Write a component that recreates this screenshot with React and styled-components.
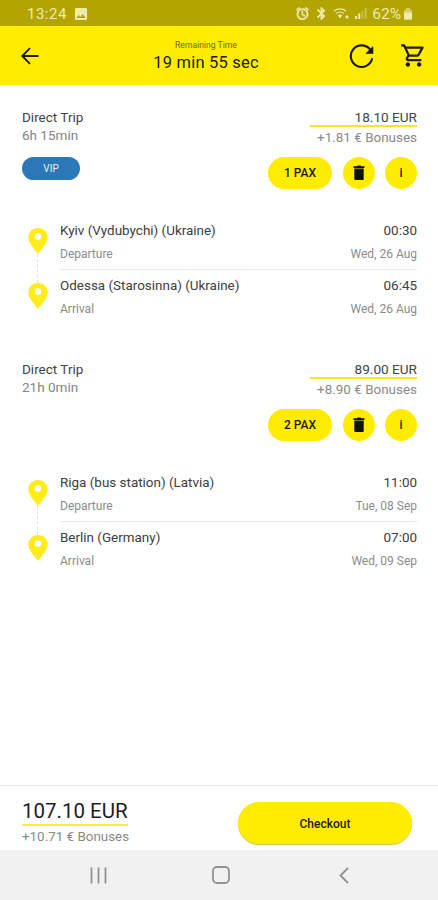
import React from "react";
import styled, { createGlobalStyle } from "styled-components";
import { MdOutlineShoppingCart, MdAlarm, MdBluetooth, MdImage } from "react-icons/md";

const GlobalStyle = createGlobalStyle`
  * {
    box-sizing: border-box;
  }

  body {
    margin: 0;
    background: #fff;
    font-family: Roboto, sans-serif;
    color: #2b2b2b;
  }

  button {
    border: 0;
    padding: 0;
    font-family: inherit;
  }

  svg {
    display: block;
    flex: none;
  }
`

const Screen = styled.div`
  width: 438px;
  height: 900px;
  display: flex;
  flex-direction: column;
  overflow: hidden;
  background: #fff;
`

const StatusBar = styled.div`
  height: 26px;
  flex: none;
  display: flex;
  justify-content: space-between;
  align-items: center;
  padding: 1px 25px 0 27px;
  background: #b3a500;
  color: #f0e9b0;
  font-size: 15px;
`

const StatusGroup = styled.div`
  display: flex;
  align-items: center;
  gap: ${({$gap}) => $gap}px;
`

const Clock = styled.span`
  letter-spacing: 0.5px;
`

const Charge = styled.span`
  margin: 0 -2px 0 1px;
  font-size: 15.5px;
`

const StatusIcon = styled.span`
  path:not([fill="none"]) {
    stroke: currentColor;
    stroke-width: 1px;
  }
`

const Header = styled.header`
  height: 59px;
  flex: none;
  display: grid;
  grid-template-columns: 110px 152px 1fr;
  align-items: center;
  padding: 0 11px 0 20px;
  background: #ffec00;
  color: #1c1a00;
`

const HeaderActions = styled.div`
  display: flex;
  justify-content: flex-end;
  align-items: center;
  gap: 25px;
`

const Timer = styled.div`
  display: flex;
  flex-direction: column;
  align-items: center;
  white-space: nowrap;
`

const TimerLabel = styled.div`
  margin-top: 1px;
  font-size: 8.6px;
  line-height: 10px;
  color: #6e6600;
`

const TimerValue = styled.div`
  margin-top: 3px;
  font-size: 16.5px;
  line-height: 20px;
  letter-spacing: 0.2px;
`

const Trips = styled.main`
  flex: 1;
  padding: 21.5px 21px 0 22px;
`

const Trip = styled.section`
  height: 252.3px;
`

const TripHead = styled.div`
  height: 112px;
  display: flex;
  justify-content: space-between;
`

const TripInfo = styled.div`
  display: flex;
  flex-direction: column;
  align-items: flex-start;
`

const TripTitle = styled.div`
  font-size: 13.5px;
  line-height: 20px;
  color: #444;
`

const Duration = styled.div`
  font-size: 13.5px;
  line-height: 17px;
  color: #858585;
`

const VipBadge = styled.div`
  width: 58px;
  height: 23px;
  margin-top: 13px;
  border-radius: 12px;
  background: #2b77b8;
  color: #e4f0fa;
  font-size: 10px;
  line-height: 23px;
  text-align: center;
`

const TripCost = styled.div`
  display: flex;
  flex-direction: column;
  align-items: flex-end;
`

const Price = styled.div`
  width: 107px;
  height: 20.5px;
  border-bottom: 2px solid #fbe61c;
  font-size: 13.6px;
  line-height: 20px;
  text-align: right;
  color: #444;
`

const Bonus = styled.div`
  margin-top: 2px;
  font-size: ${({$size}) => $size || 13.45}px;
  line-height: 18px;
  color: #8a8a8a;
  white-space: nowrap;
`

const TripActions = styled.div`
  display: flex;
  gap: 10.5px;
  margin-top: 9.5px;
`

const ActionButton = styled.button`
  width: ${({$wide}) => ($wide ? 64 : 32)}px;
  height: 32px;
  display: flex;
  align-items: center;
  justify-content: center;
  border-radius: 16px;
  background: #ffec00;
  color: #1c1a00;
  font-size: 12px;
  font-weight: 500;
`

const Route = styled.div`
  display: flex;
`

const Markers = styled.div`
  width: 31px;
  margin-right: 7px;
  padding-top: 9px;
  display: flex;
  flex-direction: column;
  align-items: center;
`

const MarkerLine = styled.div`
  height: 29px;
  border-left: 1px dashed #e2e2e2;
`

const Stops = styled.div`
  flex: 1;
  display: flex;
  flex-direction: column;
  gap: 4px;
`

const Stop = styled.div`
  height: 51px;
  padding-top: 2.2px;
  border-bottom: ${({$last}) => ($last ? "0" : "1px solid #ebebeb")};
`

const StopRow = styled.div`
  display: flex;
  justify-content: space-between;
  white-space: nowrap;
`

const StopName = styled.div`
  font-size: 13.45px;
  line-height: 20px;
  color: #404040;
`

const StopNote = styled.div`
  margin-top: 4.3px;
  font-size: 12px;
  line-height: 18px;
  color: #8c8c8c;
`

const Footer = styled.footer`
  height: 65px;
  flex: none;
  display: flex;
  justify-content: space-between;
  padding: 14px 26px 0 22px;
  border-top: 1px solid #e9e9e9;
`

const Total = styled.div`
  width: 106px;
  height: 26px;
  border-bottom: 2px solid #f7f03c;
  font-size: 20.5px;
  line-height: 22px;
  color: #1e1e1e;
  white-space: nowrap;
`

const CheckoutButton = styled.button`
  width: 174px;
  height: 42px;
  margin-top: 2px;
  padding-top: 2px;
  border-radius: 21px;
  background: #ffec00;
  box-shadow: 0 1px 1px #cfc248;
  color: #1c1a00;
  font-size: 12px;
  font-weight: 500;
`

const NavBar = styled.nav`
  height: 50px;
  flex: none;
  display: grid;
  grid-template-columns: repeat(3, 122.5px);
  justify-content: center;
  align-items: center;
  justify-items: center;
  padding-left: 4px;
  background: #f1f1f1;
`

const BackIcon = () => (
  <svg width="20" height="20" viewBox="0 0 20 20" fill="none" stroke="#1c1a00" strokeWidth="1.8">
    <path d="M18.5 10H3M10 2.2L2.2 10L10 17.8" />
  </svg>
);

const RefreshIcon = () => (
  <svg width="26" height="26" viewBox="0 0 26 26">
    <path d="M21.6 7.2A10.8 10.8 0 1 0 23.2 15.3" fill="none" stroke="#1c1a00" strokeWidth="2.1" />
    <path d="M24 3.6V10.6H16.8Z" fill="#1c1a00" stroke="#1c1a00" strokeWidth="0.6" />
  </svg>
);

const TrashIcon = () => (
  <svg width="12" height="16" viewBox="0 0 12 16" fill="#111">
    <path d="M0.5 1.2H3.8L4.5 0.4H7.5L8.2 1.2H11.5V2.9H0.5ZM1.3 3.5H10.7V14Q10.7 15 9.7 15H2.3Q1.3 15 1.3 14Z" />
  </svg>
);

const WifiIcon = () => (
  <svg width="18" height="14" viewBox="0 0 18 14" fill="none" stroke="currentColor" strokeWidth="1.2">
    <path d="M1 4.2C4.5 1.2 9.5 1.2 13 4.2M3 6.6C5.5 4.6 8.5 4.6 11 6.6" />
    <path d="M4.7 8.3Q7 6.8 9.3 8.3L7 11.5Z" fill="currentColor" stroke="none" />
    <path d="M12 10L14 8L16 10L14 12Z" fill="currentColor" stroke="none" />
  </svg>
);

const SignalIcon = () => (
  <svg width="12" height="13" viewBox="0 0 12 13" fill="currentColor">
    <rect x="0" y="9" width="2" height="3" />
    <rect x="3.2" y="6.5" width="2" height="5.5" />
    <rect x="6.4" y="4" width="2" height="8" opacity="0.4" />
    <rect x="9.6" y="1" width="2" height="11" opacity="0.4" />
  </svg>
);

const BatteryIcon = () => (
  <svg width="10" height="13" viewBox="0 0 10 13" fill="currentColor">
    <path d="M3 1H7V3H9V12.5H1V3H3Z" opacity="0.6" />
    <rect x="1" y="5.5" width="8" height="7" />
  </svg>
);

const PinIcon = () => (
  <svg width="20" height="26" viewBox="0 0 20 26">
    <path
      d="M10 0C4.5 0 .3 4.2 .3 9.6C.3 15 6.2 21 10 26C13.8 21 19.7 15 19.7 9.6C19.7 4.2 15.5 0 10 0ZM10 5.3A3.3 3.3 0 1 1 10 11.9A3.3 3.3 0 1 1 10 5.3Z"
      fill="#ffec1a"
      fillRule="evenodd"
    />
  </svg>
);

const RecentsIcon = () => (
  <svg width="17" height="17" viewBox="0 0 17 17" stroke="#929292" strokeWidth="1.8">
    <path d="M1.5 0.5V16.5M8.5 0.5V16.5M15.5 0.5V16.5" />
  </svg>
);

const HomeIcon = () => (
  <svg width="18" height="18" viewBox="0 0 18 18" fill="none" stroke="#929292" strokeWidth="1.8">
    <rect x="1" y="1" width="16" height="16" rx="4" />
  </svg>
);

const NavBackIcon = () => (
  <svg width="10" height="17" viewBox="0 0 10 17" fill="none" stroke="#929292" strokeWidth="1.8">
    <path d="M9 1L1.5 8.5L9 16" />
  </svg>
);

const trips = [
  {
    duration: "6h 15min",
    vip: true,
    price: "18.10 EUR",
    bonus: "+1.81 € Bonuses",
    pax: 1,
    stops: [
      {name: "Kyiv (Vydubychi) (Ukraine)", time: "00:30", note: "Departure", date: "Wed, 26 Aug"},
      {name: "Odessa (Starosinna) (Ukraine)", time: "06:45", note: "Arrival", date: "Wed, 26 Aug"},
    ],
  },
  {
    duration: "21h 0min",
    vip: false,
    price: "89.00 EUR",
    bonus: "+8.90 € Bonuses",
    pax: 2,
    stops: [
      {name: "Riga (bus station) (Latvia)", time: "11:00", note: "Departure", date: "Tue, 08 Sep"},
      {name: "Berlin (Germany)", time: "07:00", note: "Arrival", date: "Wed, 09 Sep"},
    ],
  },
];

const TripCard = ({trip}) => (
  <Trip>
    <TripHead>
      <TripInfo>
        <TripTitle>Direct Trip</TripTitle>
        <Duration>{trip.duration}</Duration>
        {trip.vip && <VipBadge>VIP</VipBadge>}
      </TripInfo>
      <TripCost>
        <Price>{trip.price}</Price>
        <Bonus>{trip.bonus}</Bonus>
        <TripActions>
          <ActionButton $wide>{trip.pax} PAX</ActionButton>
          <ActionButton><TrashIcon /></ActionButton>
          <ActionButton>i</ActionButton>
        </TripActions>
      </TripCost>
    </TripHead>
    <Route>
      <Markers>
        <PinIcon />
        <MarkerLine />
        <PinIcon />
      </Markers>
      <Stops>
        {trip.stops.map((stop, index) => (
          <Stop key={stop.note} $last={index === trip.stops.length - 1}>
            <StopRow>
              <StopName>{stop.name}</StopName>
              <StopName>{stop.time}</StopName>
            </StopRow>
            <StopRow>
              <StopNote>{stop.note}</StopNote>
              <StopNote>{stop.date}</StopNote>
            </StopRow>
          </Stop>
        ))}
      </Stops>
    </Route>
  </Trip>
);

const App = () => {
  return (
    <Screen>
      <GlobalStyle />
      <StatusBar>
        <StatusGroup $gap={6}>
          <Clock>13:24</Clock>
          <MdImage size={16} />
        </StatusGroup>
        <StatusGroup $gap={4}>
          <StatusIcon><MdAlarm size={15} /></StatusIcon>
          <StatusIcon><MdBluetooth size={15} /></StatusIcon>
          <WifiIcon />
          <SignalIcon />
          <Charge>62%</Charge>
          <BatteryIcon />
        </StatusGroup>
      </StatusBar>
      <Header>
        <BackIcon />
        <Timer>
          <TimerLabel>Remaining Time</TimerLabel>
          <TimerValue>19 min 55 sec</TimerValue>
        </Timer>
        <HeaderActions>
          <RefreshIcon />
          <MdOutlineShoppingCart size={27} />
        </HeaderActions>
      </Header>
      <Trips>
        {trips.map((trip) => (
          <TripCard key={trip.duration} trip={trip} />
        ))}
      </Trips>
      <Footer>
        <div>
          <Total>107.10 EUR</Total>
          <Bonus $size={13.4}>+10.71 € Bonuses</Bonus>
        </div>
        <CheckoutButton>Checkout</CheckoutButton>
      </Footer>
      <NavBar>
        <RecentsIcon />
        <HomeIcon />
        <NavBackIcon />
      </NavBar>
    </Screen>
  );
};

export default App;
